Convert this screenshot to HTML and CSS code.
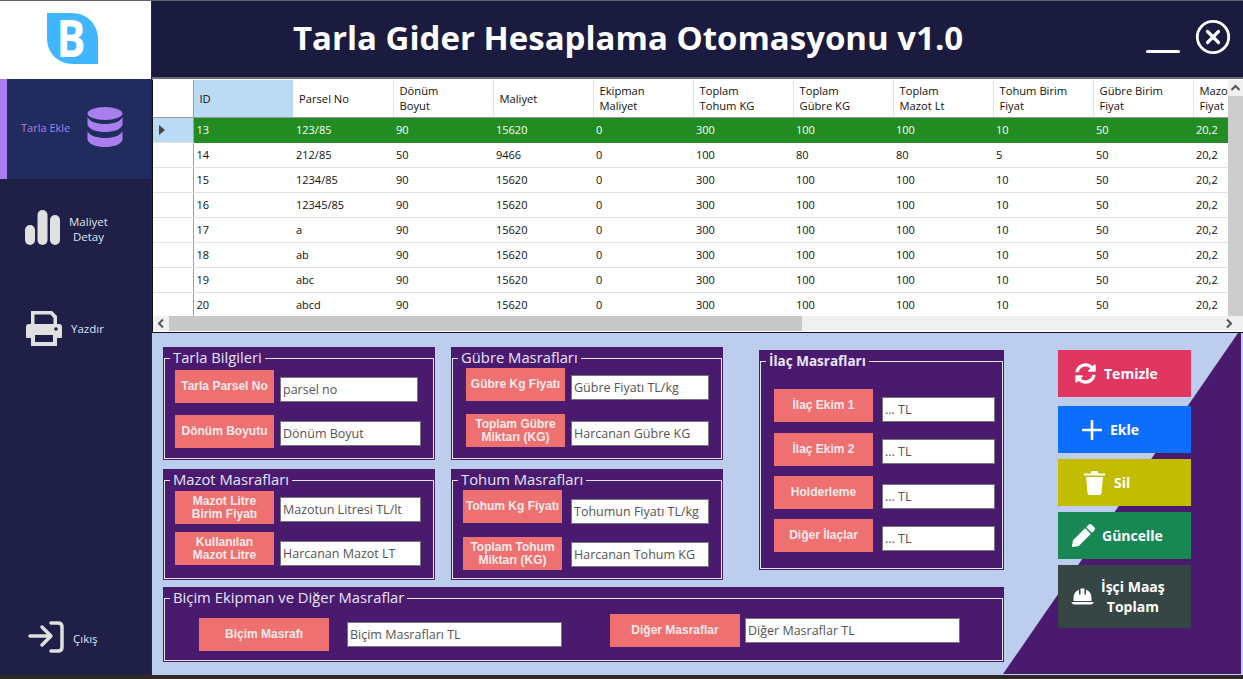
FILE: index.html
```html
<!DOCTYPE html>
<html>

<head>
    <meta charset="utf-8" />
    <title>Tarla Gider Hesaplama Otomasyonu</title>
    <link rel="stylesheet" href="styles.css">
</head>

<body>
    <div class="window">
        <aside class="sidebar">
            <div class="logo">
                <svg width="52" height="52" viewBox="0 0 52 52">
                    <path d="M0 0H24C40 0 51 11 51 27V51H26C11 51 0 40 0 25Z" fill="#3fb6ff" />
                    <text x="24" y="44" class="logo-b" textLength="29" lengthAdjust="spacingAndGlyphs">B</text>
                </svg>
            </div>
            <a class="nav-item active">
                <span class="nav-text">Tarla Ekle</span>
                <svg width="36" height="40" viewBox="0 0 36 40" fill="#a97ff0">
                    <ellipse cx="18" cy="6.5" rx="17.5" ry="6.5" />
                    <path d="M.5 10C3 15 10 17 18 17S33 15 35.5 10V18C33 23 26 25 18 25S3 23 .5 18Z" />
                    <path d="M.5 24C3 29 10 31 18 31S33 29 35.5 24V33C33 38 26 40 18 40S3 38 .5 33Z" />
                </svg>
            </a>
            <a class="nav-item stats">
                <svg width="36" height="35" viewBox="0 0 36 35" fill="#e0e0e0">
                    <rect x="0" y="15" width="10" height="20" rx="5" />
                    <rect x="12.5" y="0" width="10" height="35" rx="5" />
                    <rect x="25" y="5" width="10" height="30" rx="5" />
                </svg>
                <span class="nav-text">Maliyet<br>Detay</span>
            </a>
            <a class="nav-item print">
                <svg width="36" height="35" viewBox="0 0 36 35" fill="#e0e0e0">
                    <path d="M5 0H26L31 5V14H27.5V7L24.5 3.5H8.5V14H5Z" />
                    <path d="M3 13H33Q36 13 36 16V26Q36 27 35 27H31V35H5V27H1Q0 27 0 26V16Q0 13 3 13Z" />
                    <rect x="9" y="24" width="18" height="7" fill="#1f1f47" />
                    <circle cx="30" cy="18" r="1.8" fill="#1f1f47" />
                </svg>
                <span class="nav-text">Yazdır</span>
            </a>
            <a class="nav-item exit">
                <svg width="36" height="32" viewBox="0 0 36 32" fill="none" stroke="#e0e0e0" stroke-width="3.5"
                    stroke-linecap="round" stroke-linejoin="round">
                    <path d="M2 15H23M14 6L23 15L14 24" />
                    <path d="M23 2H30Q34 2 34 6V26Q34 30 30 30H23" />
                </svg>
                <span class="nav-text">Çıkış</span>
            </a>
        </aside>

        <main class="content">
            <header class="titlebar">
                <h1>Tarla Gider Hesaplama Otomasyonu v1.0</h1>
                <span class="minimize"></span>
                <svg class="close" width="36" height="36" viewBox="0 0 36 36" fill="none" stroke="#fff">
                    <circle cx="18" cy="18" r="15.7" stroke-width="2.8" />
                    <path d="M12.5 12.5L23.5 23.5M23.5 12.5L12.5 23.5" stroke-width="3.2" stroke-linecap="round" />
                </svg>
            </header>

            <section class="datagrid">
                <div class="grid-view">
                    <table>
                        <thead>
                            <tr>
                                <th class="row-head"></th>
                                <th class="sorted">ID</th>
                                <th>Parsel No</th>
                                <th>Dönüm<br>Boyut</th>
                                <th>Maliyet</th>
                                <th>Ekipman<br>Maliyet</th>
                                <th>Toplam<br>Tohum KG</th>
                                <th>Toplam<br>Gübre KG</th>
                                <th>Toplam<br>Mazot Lt</th>
                                <th>Tohum Birim<br>Fiyat</th>
                                <th>Gübre Birim<br>Fiyat</th>
                                <th>Mazot Birim<br>Fiyat</th>
                            </tr>
                        </thead>
                        <tbody>
                            <tr class="selected">
                                <td class="row-head"><span class="pointer"></span></td>
                                <td>13</td><td>123/85</td><td>90</td><td>15620</td><td>0</td><td>300</td><td>100</td><td>100</td><td>10</td><td>50</td><td>20,2</td>
                            </tr>
                            <tr>
                                <td class="row-head"></td>
                                <td>14</td><td>212/85</td><td>50</td><td>9466</td><td>0</td><td>100</td><td>80</td><td>80</td><td>5</td><td>50</td><td>20,2</td>
                            </tr>
                            <tr>
                                <td class="row-head"></td>
                                <td>15</td><td>1234/85</td><td>90</td><td>15620</td><td>0</td><td>300</td><td>100</td><td>100</td><td>10</td><td>50</td><td>20,2</td>
                            </tr>
                            <tr>
                                <td class="row-head"></td>
                                <td>16</td><td>12345/85</td><td>90</td><td>15620</td><td>0</td><td>300</td><td>100</td><td>100</td><td>10</td><td>50</td><td>20,2</td>
                            </tr>
                            <tr>
                                <td class="row-head"></td>
                                <td>17</td><td>a</td><td>90</td><td>15620</td><td>0</td><td>300</td><td>100</td><td>100</td><td>10</td><td>50</td><td>20,2</td>
                            </tr>
                            <tr>
                                <td class="row-head"></td>
                                <td>18</td><td>ab</td><td>90</td><td>15620</td><td>0</td><td>300</td><td>100</td><td>100</td><td>10</td><td>50</td><td>20,2</td>
                            </tr>
                            <tr>
                                <td class="row-head"></td>
                                <td>19</td><td>abc</td><td>90</td><td>15620</td><td>0</td><td>300</td><td>100</td><td>100</td><td>10</td><td>50</td><td>20,2</td>
                            </tr>
                            <tr>
                                <td class="row-head"></td>
                                <td>20</td><td>abcd</td><td>90</td><td>15620</td><td>0</td><td>300</td><td>100</td><td>100</td><td>10</td><td>50</td><td>20,2</td>
                            </tr>
                        </tbody>
                    </table>
                </div>
                <div class="vscroll">
                    <svg width="15" height="16" viewBox="0 0 15 16"><path d="M3.5 10L7.5 6L11.5 10" fill="none" stroke="#555" stroke-width="2" /></svg>
                    <div class="vthumb"></div>
                </div>
                <div class="hscroll">
                    <svg width="16" height="15" viewBox="0 0 16 15"><path d="M10 3.5L6 7.5L10 11.5" fill="none" stroke="#555" stroke-width="2" /></svg>
                    <div class="hthumb"></div>
                    <svg class="hscroll-end" width="16" height="15" viewBox="0 0 16 15"><path d="M6 3.5L10 7.5L6 11.5" fill="none" stroke="#555" stroke-width="2" /></svg>
                </div>
            </section>

            <section class="lower">
                <div class="corner-shape"></div>
                <div class="groups">
                    <div class="group">
                        <fieldset class="tarla">
                            <legend>Tarla Bilgileri</legend>
                            <div class="field">
                                <label class="lbl">Tarla Parsel No</label>
                                <input class="inp w138 drop-7" value="parsel no">
                            </div>
                            <div class="field mt-12">
                                <label class="lbl">Dönüm Boyutu</label>
                                <input class="inp w141 drop-6" value="Dönüm Boyut">
                            </div>
                        </fieldset>
                    </div>

                    <div class="group">
                        <fieldset class="gubre">
                            <legend>Gübre Masrafları</legend>
                            <div class="field">
                                <label class="lbl">Gübre Kg Fiyatı</label>
                                <input class="inp w138 drop-7" value="Gübre Fiyatı TL/kg">
                            </div>
                            <div class="field mt-13">
                                <label class="lbl">Toplam Gübre<br>Miktarı (KG)</label>
                                <input class="inp w138 drop-7" value="Harcanan Gübre KG">
                            </div>
                        </fieldset>
                    </div>

                    <div class="group ilac">
                        <fieldset class="ilac-set">
                            <legend>İlaç Masrafları</legend>
                            <div class="field">
                                <label class="lbl">İlaç Ekim 1</label>
                                <input class="inp w113 drop-8" value="... TL">
                            </div>
                            <div class="field mt-11">
                                <label class="lbl">İlaç Ekim 2</label>
                                <input class="inp w113 drop-6" value="... TL">
                            </div>
                            <div class="field mt-10">
                                <label class="lbl">Holderleme</label>
                                <input class="inp w113 drop-8" value="... TL">
                            </div>
                            <div class="field mt-10">
                                <label class="lbl">Diğer İlaçlar</label>
                                <input class="inp w113 drop-7" value="... TL">
                            </div>
                        </fieldset>
                    </div>

                    <div class="group">
                        <fieldset class="mazot">
                            <legend>Mazot Masrafları</legend>
                            <div class="field">
                                <label class="lbl">Mazot Litre<br>Birim Fiyatı</label>
                                <input class="inp w141 drop-6" value="Mazotun Litresi TL/lt">
                            </div>
                            <div class="field mt-8">
                                <label class="lbl">Kullanılan<br>Mazot Litre</label>
                                <input class="inp w141 drop-9" value="Harcanan Mazot LT">
                            </div>
                        </fieldset>
                    </div>

                    <div class="group">
                        <fieldset class="tohum">
                            <legend>Tohum Masrafları</legend>
                            <div class="field">
                                <label class="lbl">Tohum Kg Fiyatı</label>
                                <input class="inp w138 drop-9" value="Tohumun Fiyatı TL/kg">
                            </div>
                            <div class="field mt-13">
                                <label class="lbl">Toplam Tohum<br>Miktarı (KG)</label>
                                <input class="inp w138 drop-5" value="Harcanan Tohum KG">
                            </div>
                        </fieldset>
                    </div>

                    <div class="group wide">
                        <fieldset class="bicim">
                            <legend>Biçim Ekipman ve Diğer Masraflar</legend>
                            <div class="bicim-row">
                                <div class="field first">
                                    <label class="lbl long">Biçim Masrafı</label>
                                    <input class="inp w215 drop-4" value="Biçim Masrafları TL">
                                </div>
                                <div class="field second">
                                    <label class="lbl long">Diğer Masraflar</label>
                                    <input class="inp w215 drop-4" value="Diğer Masraflar TL">
                                </div>
                            </div>
                        </fieldset>
                    </div>
                </div>

                <div class="actions">
                    <button class="btn temizle">
                        <svg width="21" height="21" viewBox="0 0 512 512" fill="#fff"><path d="M370.72 133.28C339.458 104.008 298.888 87.962 255.848 88c-77.458.068-144.328 53.178-162.791 126.85-1.344 5.363-6.122 9.15-11.651 9.15H24.103c-7.498 0-13.194-6.807-11.807-14.176C33.933 94.924 134.813 8 256 8c66.448 0 126.791 26.136 171.315 68.685L463.03 40.97C478.149 25.851 504 36.559 504 57.941V192c0 13.255-10.745 24-24 24H345.941c-21.382 0-32.09-25.851-16.971-40.971l41.75-41.749zM32 296h134.059c21.382 0 32.09 25.851 16.971 40.971l-41.75 41.75c31.262 29.273 71.835 45.319 114.876 45.28 77.418-.07 144.315-53.144 162.787-126.849 1.344-5.363 6.122-9.15 11.651-9.15h57.304c7.498 0 13.194 6.807 11.807 14.176C478.067 417.076 377.187 504 256 504c-66.448 0-126.791-26.136-171.315-68.685L48.97 471.03C33.851 486.149 8 475.441 8 454.059V320c0-13.255 10.745-24 24-24z" /></svg>
                        Temizle
                    </button>
                    <button class="btn ekle">
                        <svg width="20" height="20" viewBox="0 0 20 20" stroke="#fff" stroke-width="2.6" stroke-linecap="round"><path d="M10 1V19M1 10H19" /></svg>
                        Ekle
                    </button>
                    <button class="btn sil">
                        <svg width="21" height="25" viewBox="0 0 21 25" fill="#fff">
                            <path d="M0 3.5H6.5L7.5 1H13.5L14.5 3.5H21V5.5H0Z" />
                            <path d="M2 7H19L17.5 23Q17.3 25 15.5 25H5.5Q3.7 25 3.5 23Z" />
                        </svg>
                        Sil
                    </button>
                    <button class="btn guncelle">
                        <svg width="23" height="23" viewBox="0 0 512 512" fill="#fff"><path d="M497.9 142.1l-46.1 46.1c-4.7 4.7-12.3 4.7-17 0l-111-111c-4.7-4.7-4.7-12.3 0-17l46.1-46.1c18.7-18.7 49.1-18.7 67.9 0l60.1 60.1c18.8 18.7 18.8 49.1 0 67.9zM284.2 99.8L21.6 362.4.4 483.9c-2.9 16.4 11.4 30.6 27.8 27.8l121.5-21.3 262.6-262.6c4.7-4.7 4.7-12.3 0-17l-111-111c-4.8-4.7-12.4-4.7-17.1 0z" /></svg>
                        Güncelle
                    </button>
                    <button class="btn isci">
                        <svg width="23" height="19" viewBox="0 0 23 19" fill="#fff">
                            <path d="M2.5 14V11C2.5 7 4.5 4 8 2.8V7.5H9.5V1.5H13.5V7.5H15V2.8C18.5 4 20.5 7 20.5 11V14Z" />
                            <path d="M.5 15H22.5Q22.5 17.5 19 17.5H4Q.5 17.5 .5 15Z" />
                        </svg>
                        <span>İşçi Maaş<br>Toplam</span>
                    </button>
                </div>
            </section>
        </main>
    </div>
</body>

</html>
```

FILE: styles.css
```css
* {
    box-sizing: border-box;
}

html,
body {
    margin: 0;
    padding: 0;
    height: 100%;
    overflow: hidden;
}

body {
    background-color: #2e2826;
    border-top: 1px solid #5b6468;
    font-family: "Open Sans", sans-serif;
}

.window {
    display: flex;
    height: 674px;
}

/* left menu */
.sidebar {
    width: 151px;
    flex: none;
    display: flex;
    flex-direction: column;
    background-color: #1f1f47;
}

.logo {
    height: 78px;
    flex: none;
    padding: 12px 0 0 47px;
    background-color: white;
}

.logo-b {
    font-family: "Open Sans", sans-serif;
    font-size: 52px;
    font-weight: 700;
    fill: white;
    text-anchor: middle;
}

.nav-item {
    display: flex;
    align-items: center;
    height: 100px;
    flex: none;
    color: #dbe6f5;
    font-size: 11.5px;
    line-height: 15px;
    text-align: center;
}

.nav-item.active {
    background-color: #202c5e;
    border-left: 7px solid #a97ff0;
    color: #a97ff0;
    font-size: 11px;
    padding: 0 0 4px 14px;
    gap: 17px;
}

.nav-item.stats {
    padding-left: 25px;
    padding-bottom: 4px;
    gap: 8px;
}

.nav-item.stats .nav-text {
    margin-top: 4px;
}

.nav-item.print {
    padding-left: 26px;
    padding-bottom: 2px;
    gap: 9px;
}

.nav-item.exit {
    height: 76px;
    margin-top: auto;
    padding-left: 28px;
    gap: 9px;
}

.nav-item.exit .nav-text {
    margin-top: 3px;
}

.content {
    flex: 1;
    min-width: 0;
    display: flex;
    flex-direction: column;
    margin-left: 1px;
}

/* title */
.titlebar {
    height: 78px;
    flex: none;
    display: flex;
    align-items: center;
    padding-left: 141px;
    background-color: #1b1b40;
    border-bottom: 2px solid #6b6b78;
}

.titlebar h1 {
    margin: 0 0 4px;
    width: 853px;
    flex: none;
    color: white;
    font-size: 33px;
    font-weight: 700;
    white-space: nowrap;
}

.minimize {
    width: 34px;
    height: 3px;
    margin-top: 25px;
    background-color: white;
    border-radius: 2px;
}

.close {
    margin-left: 15px;
    margin-top: -4px;
}

/* table */
.datagrid {
    height: 254px;
    flex: none;
    display: grid;
    grid-template-columns: 1fr 15px;
    grid-template-rows: 1fr 16px;
    background-color: white;
    border-left: 1px solid #111;
    border-bottom: 1px solid #111;
    border-top: 1px solid #fff;
}

.grid-view {
    overflow: hidden;
    min-width: 0;
}

table {
    border-collapse: collapse;
    table-layout: fixed;
    width: 1140px;
    font-size: 11px;
    color: #111;
}

th {
    width: 100px;
    height: 37px;
    padding: 0 0 0 6px;
    font-size: 11.2px;
    font-weight: 400;
    line-height: 15px;
    text-align: left;
    vertical-align: middle;
    background-color: white;
    border-right: 1px solid #e4e4e4;
    border-bottom: 1px solid #999;
}

th.row-head,
td.row-head {
    width: 40px;
    padding: 0;
    border-right: 1px solid #a0a0a0;
}

th.sorted {
    background-color: #bbdaf3;
    border-right: 0;
}

td {
    height: 25px;
    padding: 0 0 0 3px;
    border-bottom: 1px solid #e2e2e2;
    white-space: nowrap;
}

tr.selected td {
    background-color: #228b22;
    color: white;
    border-bottom: 1px solid #228b22;
}

tr.selected td.row-head {
    background-color: #bbdaf3;
    border-bottom: 1px solid #e2e2e2;
}

.pointer {
    display: block;
    width: 0;
    height: 0;
    margin-left: 6px;
    border-left: 6px solid #444;
    border-top: 5px solid transparent;
    border-bottom: 5px solid transparent;
}

.vscroll {
    display: flex;
    flex-direction: column;
    background-color: #f0f0f0;
}

.vscroll svg {
    flex: none;
}

.vthumb {
    flex: 1;
    background-color: #cdcdcd;
}

.hscroll {
    display: flex;
    grid-column: 1 / -1;
    background-color: #f0f0f0;
    border-bottom: 1px solid white;
}

.hscroll svg {
    flex: none;
}

.hthumb {
    width: 633px;
    background-color: #c8c8c8;
}

.hscroll-end {
    margin-left: auto;
    margin-right: 6px;
}

/* lower form area */
.lower {
    position: relative;
    flex: 1;
    display: flex;
    align-items: flex-start;
    padding: 14px 0 0 11px;
    background-color: #bdcdee;
}

.corner-shape {
    position: absolute;
    inset: 0;
    background-color: #4a1a6e;
    clip-path: polygon(1086px 0, 1089px 0, 1089px 341px, 851px 341px);
}

.groups {
    position: relative;
    display: grid;
    grid-template-columns: 272px 272px 265px;
    grid-template-rows: 113px 111px 73px;
    column-gap: 16px;
    row-gap: 9px;
    width: 841px;
    flex: none;
}

.group {
    padding: 1px;
    background-color: #4a1a6e;
}

.group.ilac {
    grid-column: 3;
    grid-row: 1 / 3;
    justify-self: end;
    align-self: start;
    width: 245px;
    height: 220px;
    margin-top: 3px;
}

.group.wide {
    grid-column: 1 / -1;
    margin-top: -2px;
}

fieldset {
    height: 100%;
    min-width: 0;
    margin: 0;
    padding: 0;
    border: 1px solid #e3e3f2;
}

legend {
    margin-left: 5px;
    padding: 0 3px;
    height: 20px;
    color: #e6e6fa;
    font-size: 14.8px;
    line-height: 18px;
    white-space: nowrap;
}

.ilac-set legend {
    font-weight: 700;
    font-size: 13.5px;
    line-height: 20px;
}

.field {
    display: flex;
    align-items: flex-start;
}

.lbl {
    width: 99px;
    height: 33px;
    flex: none;
    display: flex;
    align-items: center;
    justify-content: center;
    background-color: #ee7070;
    color: #fbeaea;
    font-family: "Liberation Sans", sans-serif;
    font-size: 12px;
    font-weight: 700;
    line-height: 13px;
    text-align: center;
}

.lbl.long {
    width: 130px;
}

.inp {
    height: 25px;
    flex: none;
    padding: 0 2px;
    background-color: white;
    border: 1px solid #777;
    border-radius: 0;
    color: #555;
    font-family: "Open Sans", sans-serif;
    font-size: 12.5px;
    outline: none;
}

.w113 { width: 113px; }
.w138 { width: 138px; }
.w141 { width: 141px; }
.w215 { width: 215px; }

.drop-4 { margin-top: 4px; }
.drop-5 { margin-top: 5px; }
.drop-6 { margin-top: 6px; }
.drop-7 { margin-top: 7px; }
.drop-8 { margin-top: 8px; }
.drop-9 { margin-top: 9px; }

.mt-8 { margin-top: 8px; }
.mt-10 { margin-top: 10px; }
.mt-11 { margin-top: 11px; }
.mt-12 { margin-top: 12px; }
.mt-13 { margin-top: 13px; }

.tarla {
    padding-top: 2px;
}

.mazot {
    padding-top: 1px;
}

.ilac-set {
    padding-top: 18px;
}

.tarla .field,
.mazot .field,
.tohum .field {
    margin-left: 10px;
}

.gubre .field,
.ilac-set .field {
    margin-left: 13px;
}

.tarla .inp,
.gubre .inp,
.mazot .inp {
    margin-left: 6px;
}

.tohum .inp,
.ilac-set .inp {
    margin-left: 9px;
}

.bicim-row {
    display: flex;
    align-items: flex-start;
}

.bicim .first {
    margin: 10px 0 0 34px;
}

.bicim .first .inp {
    margin-left: 18px;
}

.bicim .second {
    margin: 6px 0 0 48px;
}

.bicim .second .inp {
    margin-left: 5px;
}

/* right side buttons */
.actions {
    position: relative;
    width: 133px;
    flex: none;
    display: flex;
    flex-direction: column;
    gap: 6px;
    margin: 3px 0 0 54px;
}

.btn {
    display: flex;
    align-items: center;
    height: 47px;
    flex: none;
    padding: 0;
    border: none;
    color: white;
    font-family: "Open Sans", sans-serif;
    font-size: 14px;
    font-weight: 700;
    line-height: 20px;
    text-align: center;
    cursor: pointer;
}

.btn.temizle {
    background-color: #e0365f;
    padding-left: 17px;
    gap: 8px;
    margin-bottom: 3px;
}

.btn.ekle {
    background-color: #0d6efd;
    padding-left: 24px;
    gap: 8px;
}

.btn.sil {
    background-color: #c2bd00;
    padding-left: 26px;
    gap: 9px;
}

.btn.guncelle {
    background-color: #198754;
    padding-left: 14px;
    gap: 7px;
}

.btn.isci {
    height: 63px;
    background-color: #364644;
    padding-left: 13px;
    gap: 7px;
}
```
